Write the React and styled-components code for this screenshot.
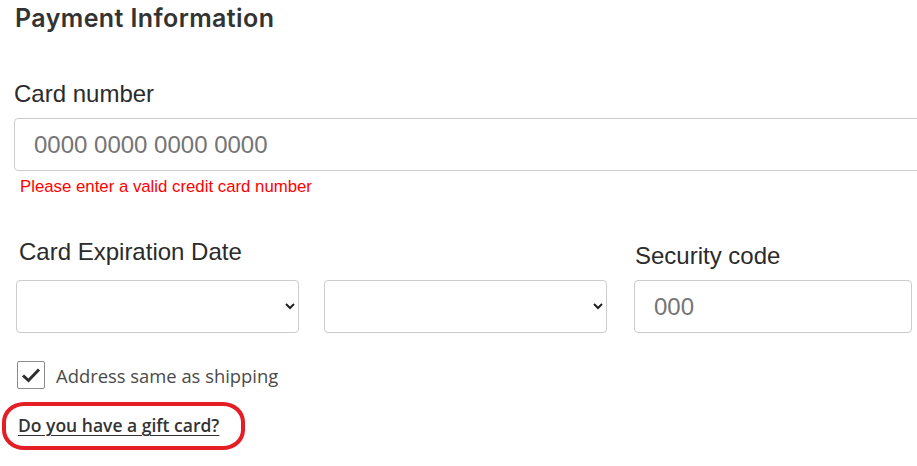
import React from "react";
import styled, { createGlobalStyle } from "styled-components";

const GlobalStyle = createGlobalStyle`
  html, body {
    margin: 0;
    padding: 0;
    background: #ffffff;
    overflow: hidden;
  }
  body {
    font-family: "Liberation Sans", Arial, sans-serif;
    color: #333333;
  }
`;

const Page = styled.div`
  padding-left: 14px;
  width: 917px;
  height: 466px;
  box-sizing: border-box;
`;

const Title = styled.h2`
  margin: 4px 0 0 1px;
  font-family: Inter, "Liberation Sans", sans-serif;
  font-size: 25px;
  line-height: 29px;
  font-weight: 600;
  letter-spacing: 0.4px;
  color: #333333;
`;

const Label = styled.label`
  display: block;
  font-size: 24px;
  line-height: 29px;
  color: #2b2b2b;
  margin-top: ${props => props.top || 0}px;
  margin-bottom: ${props => props.bottom || 10}px;
  padding-left: ${props => props.indent || 0}px;
`;

const TextInput = styled.input`
  display: block;
  box-sizing: border-box;
  width: ${props => props.width};
  height: 53px;
  padding: 0 19px;
  border: 1px solid #cccccc;
  border-radius: 4px;
  font-family: "Liberation Sans", Arial, sans-serif;
  font-size: 24px;
  color: #333333;
  background: #ffffff;
  outline: none;

  &::placeholder {
    color: #757575;
  }
`;

const ErrorText = styled.div`
  margin: 7px 0 0 6px;
  font-size: 16.8px;
  line-height: 18px;
  color: #ff0000;
`;

const ExpiryRow = styled.div`
  display: flex;
  align-items: flex-end;
  margin-top: 41px;
  padding-left: 2px;
`;

const Group = styled.div`
  display: flex;
  flex-direction: column;
  margin-left: ${props => props.offset || 0}px;
`;

const Selects = styled.div`
  display: flex;
  gap: 25px;
`;

const Select = styled.select`
  width: 283px;
  height: 53px;
  box-sizing: border-box;
  border: 1px solid #cccccc;
  border-radius: 4px;
  background: #ffffff;
  padding: 0 10px 0 8px;
  font-family: "Liberation Sans", Arial, sans-serif;
  font-size: 16px;
  color: #222222;
`;

const CheckRow = styled.label`
  display: flex;
  align-items: center;
  gap: 11px;
  margin: 28px 0 0 3px;
  font-family: "Open Sans", sans-serif;
  font-size: 18.4px;
  color: #4a4a4a;
`;

const CheckBox = styled.span`
  display: flex;
  align-items: center;
  justify-content: center;
  width: 28px;
  height: 28px;
  box-sizing: border-box;
  border: 1px solid #8a8a8a;
  border-radius: 2px;
  background: #ffffff;
`;

const LinkWrap = styled.div`
  position: relative;
  display: inline-block;
  margin: 25px 0 0 4px;
`;

const GiftLink = styled.a`
  font-family: "Open Sans", sans-serif;
  font-size: 17.5px;
  line-height: 23px;
  font-weight: 600;
  color: #333333;
  text-decoration: underline;
  text-underline-offset: 3px;
  text-decoration-thickness: 1px;
  cursor: pointer;
`;

const Highlight = styled.span`
  position: absolute;
  left: -16px;
  top: -12px;
  right: -26px;
  bottom: -13px;
  border: 4px solid #e51e25;
  border-radius: 22px / 20px;
  pointer-events: none;
`;

const Check = () => (
  <svg width="20" height="16" viewBox="0 0 20 16">
    <path d="M2 8.5 L7.5 13.5 L18 2.5" fill="none" stroke="#2d2d2d" strokeWidth="3" />
  </svg>
);

const App = () => {
  return (
    <Page>
      <GlobalStyle />
      <Title>Payment Information</Title>

      <Label top={46}>Card number</Label>
      <TextInput width="940px" placeholder="0000 0000 0000 0000" />
      <ErrorText>Please enter a valid credit card number</ErrorText>

      <ExpiryRow>
        <Group>
          <Label indent={3} bottom={14}>Card Expiration Date</Label>
          <Selects>
            <Select defaultValue="">
              <option value=""></option>
            </Select>
            <Select defaultValue="">
              <option value=""></option>
            </Select>
          </Selects>
        </Group>
        <Group offset={27}>
          <Label indent={1} bottom={10}>Security code</Label>
          <TextInput width="278px" placeholder="000" />
        </Group>
      </ExpiryRow>

      <CheckRow>
        <CheckBox>
          <Check />
        </CheckBox>
        Address same as shipping
      </CheckRow>

      <LinkWrap>
        <GiftLink>Do you have a gift card?</GiftLink>
        <Highlight />
      </LinkWrap>
    </Page>
  );
};

export default App;
